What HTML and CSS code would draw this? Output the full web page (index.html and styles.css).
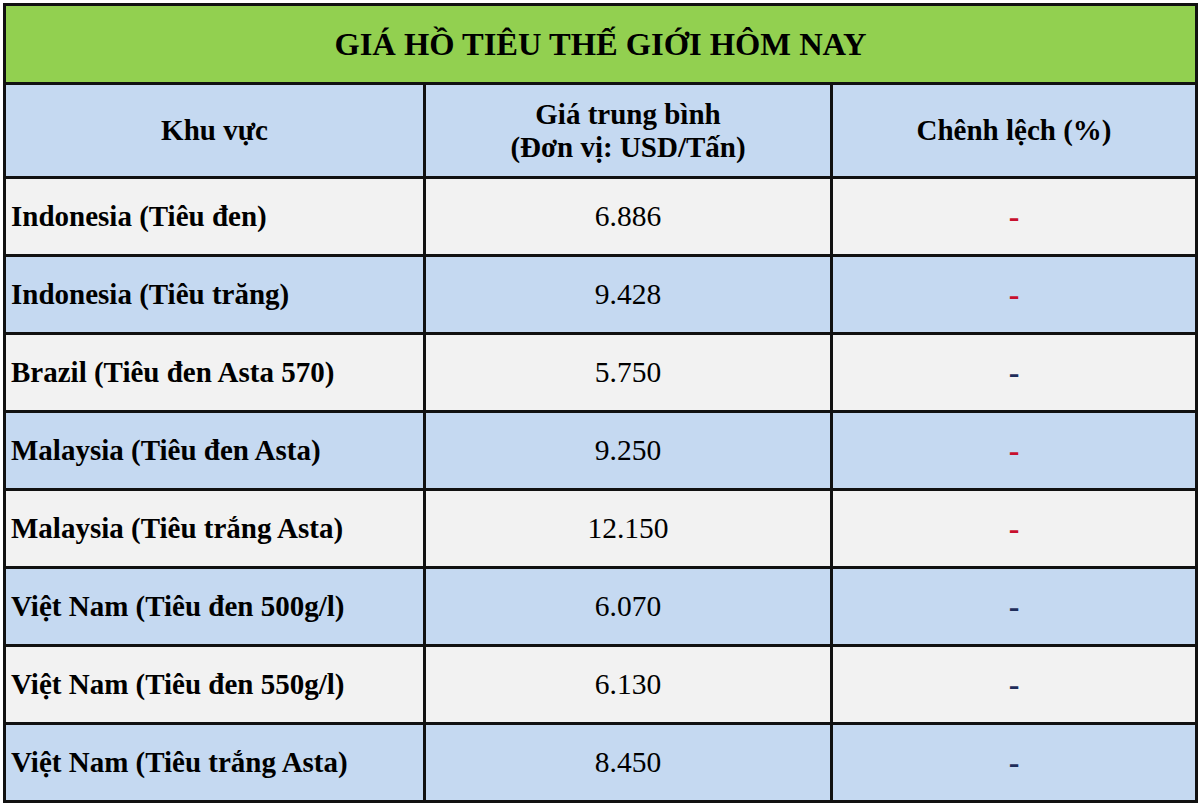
FILE: index.html
```html
<!DOCTYPE html>
<html lang="vi">
<head>
<meta charset="utf-8">
<title>Giá hồ tiêu thế giới hôm nay</title>
<link rel="stylesheet" href="styles.css">
</head>
<body>
<div class="page">
  <div class="grid" role="table">
    <div class="cell title" role="row">GIÁ HỒ TIÊU THẾ GIỚI HÔM NAY</div>

    <div class="cell head" role="columnheader">Khu vực</div>
    <div class="cell head" role="columnheader">Giá trung bình<br>(Đơn vị: USD/Tấn)</div>
    <div class="cell head" role="columnheader">Chênh lệch (%)</div>

    <div class="cell label light">Indonesia (Tiêu đen)</div>
    <div class="cell num light">6.886</div>
    <div class="cell chg light"><span class="dash red">-</span></div>

    <div class="cell label blue">Indonesia (Tiêu trăng)</div>
    <div class="cell num blue">9.428</div>
    <div class="cell chg blue"><span class="dash red">-</span></div>

    <div class="cell label light">Brazil (Tiêu đen Asta 570)</div>
    <div class="cell num light">5.750</div>
    <div class="cell chg light"><span class="dash navy">-</span></div>

    <div class="cell label blue">Malaysia (Tiêu đen Asta)</div>
    <div class="cell num blue">9.250</div>
    <div class="cell chg blue"><span class="dash red">-</span></div>

    <div class="cell label light">Malaysia (Tiêu trắng Asta)</div>
    <div class="cell num light">12.150</div>
    <div class="cell chg light"><span class="dash red">-</span></div>

    <div class="cell label blue">Việt Nam (Tiêu đen 500g/l)</div>
    <div class="cell num blue">6.070</div>
    <div class="cell chg blue"><span class="dash navy">-</span></div>

    <div class="cell label light">Việt Nam (Tiêu đen 550g/l)</div>
    <div class="cell num light">6.130</div>
    <div class="cell chg light"><span class="dash navy">-</span></div>

    <div class="cell label blue">Việt Nam (Tiêu trắng Asta)</div>
    <div class="cell num blue">8.450</div>
    <div class="cell chg blue"><span class="dash navy">-</span></div>
  </div>
</div>
</body>
</html>
```

FILE: styles.css
```css
html, body {
  margin: 0;
  padding: 0;
  background: #ffffff;
  font-family: "Liberation Serif", "Times New Roman", serif;
}

.page {
  padding: 3px 2px 0 3px;
  color: #000000;
}

.grid {
  display: grid;
  grid-template-columns: 417px 404px 362px;
  grid-template-rows: 76px 91px repeat(8, 75px);
  gap: 3px;
  padding: 3px;
  background: #111111;
  width: 1189px;
}

.cell {
  display: flex;
  align-items: center;
  justify-content: center;
  font-size: 29px;
}

.title {
  grid-column: 1 / 4;
  background: #92d050;
  font-size: 32.5px;
  font-weight: bold;
}

.head {
  background: #c5d9f1;
  font-weight: bold;
  text-align: center;
  line-height: 33px;
}

.light {
  background: #f2f2f2;
}

.blue {
  background: #c5d9f1;
}

.label {
  justify-content: flex-start;
  padding-left: 5px;
  font-weight: bold;
}

.num {
  font-weight: normal;
  font-size: 29.5px;
}

.dash {
  font-weight: bold;
  font-size: 32px;
}

.red {
  color: #c8102e;
}

.navy {
  color: #1f2d5a;
}
```
